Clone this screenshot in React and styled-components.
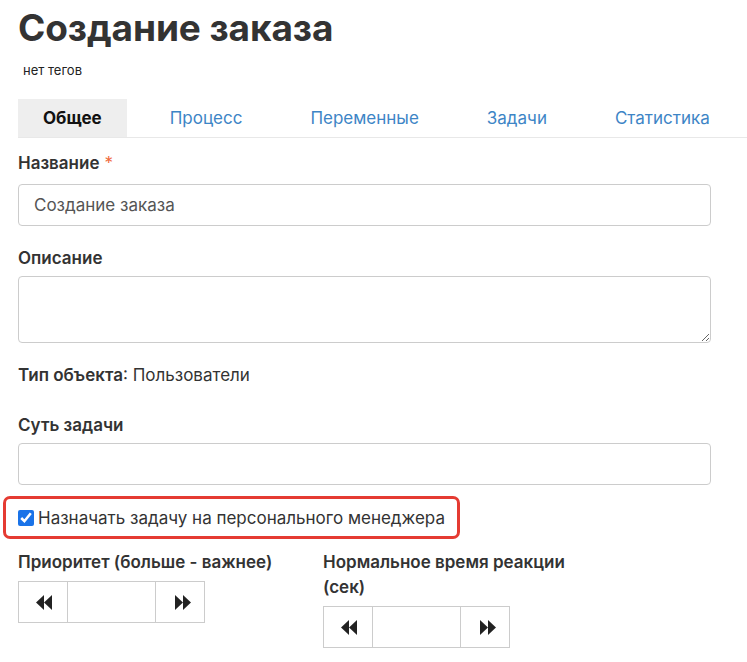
import React, { useState } from 'react';
import styled, { createGlobalStyle } from 'styled-components';

const GlobalStyle = createGlobalStyle`
  body {
    margin: 0;
    background: #fff;
    font-family: Inter, 'Noto Sans', sans-serif;
    color: #333;
  }
`;

const Page = styled.div`
  padding: 6px 0 0 18px;
`;

const Title = styled.h1`
  font-size: 37px;
  font-weight: 700;
  line-height: 44px;
  margin: 0;
  color: #333;
  letter-spacing: -0.1px;
`;

const Tags = styled.div`
  font-size: 13px;
  color: #222;
  margin: 12px 0 0 5px;
  line-height: 16px;
`;

const TabBar = styled.ul`
  display: flex;
  list-style: none;
  margin: 21px 0 0 0;
  padding: 0;
  border-bottom: 1px solid #e8e8e8;
  gap: 18px;
`;

const Tab = styled.li`
  padding: 0 25px;
  height: 38px;
  display: flex;
  align-items: center;
  font-size: 17px;
  font-weight: ${props => (props.active ? 700 : 400)};
  color: ${props => (props.active ? '#111' : '#3d85c6')};
  background: ${props => (props.active ? '#eee' : 'transparent')};
  cursor: pointer;
`;

const Form = styled.form`
  width: 693px;
  padding-top: 14px;
`;

const Field = styled.div`
  margin-bottom: ${props => props.gap ?? 21}px;
`;

const Label = styled.label`
  display: block;
  font-size: 17px;
  font-weight: 600;
  line-height: 22px;
  margin-bottom: ${props => props.gap ?? 7}px;
  color: #333;
`;

const Required = styled.span`
  color: #f06a3c;
  font-weight: 400;
  margin-left: 5px;
`;

const TextInput = styled.input`
  display: block;
  box-sizing: border-box;
  width: 100%;
  height: 42px;
  border: 1px solid #ccc;
  border-radius: 4px;
  padding: 0 15px;
  font-family: Inter, 'Noto Sans', sans-serif;
  font-size: 17px;
  color: #555;
  outline: none;
`;

const TextArea = styled.textarea`
  display: block;
  box-sizing: border-box;
  width: 100%;
  height: 67px;
  border: 1px solid #ccc;
  border-radius: 4px;
  padding: 8px 15px;
  font-family: Inter, 'Noto Sans', sans-serif;
  font-size: 17px;
  outline: none;
`;

const InfoLine = styled.div`
  font-size: 17px;
  line-height: 22px;
  color: #333;
  margin-bottom: 28px;

  b {
    font-weight: 600;
  }
`;

const Highlight = styled.div`
  display: inline-flex;
  align-items: center;
  margin: 11px 0 0 -15px;
  padding: 0 12px 0 12px;
  height: 37px;
  border: 3px solid #e53b32;
  border-radius: 7px;
`;

const CheckLabel = styled.label`
  display: flex;
  align-items: center;
  font-size: 17px;
  color: #333;
  cursor: pointer;

  input {
    width: 16px;
    height: 16px;
    margin: 0 4px 0 0;
    accent-color: #1a73e8;
  }
`;

const Columns = styled.div`
  display: grid;
  grid-template-columns: 305px 260px;
  margin-top: 11px;
`;

const SpinLabel = styled(Label)`
  line-height: 25px;
  margin-bottom: 6px;
`;

const Spinner = styled.div`
  display: flex;
  width: 187px;
  height: 42px;
  border: 1px solid #ccc;
  box-sizing: border-box;
`;

const SpinButton = styled.button`
  width: 49px;
  border: none;
  background: #fff;
  display: flex;
  align-items: center;
  justify-content: center;
  padding: 0 0 0 4px;
  cursor: pointer;
  border-${props => (props.side === 'left' ? 'right' : 'left')}: 1px solid #ccc;
`;

const SpinValue = styled.input`
  flex: 1;
  min-width: 0;
  border: none;
  outline: none;
  font-size: 17px;
  text-align: center;
`;

const Arrows = ({ dir }) => (
  <svg width="18" height="15" viewBox="0 0 18 15">
    {dir === 'left' ? (
      <g fill="#222">
        <polygon points="0,7.5 8,0 8,15" />
        <polygon points="8,7.5 16,0 16,15" />
      </g>
    ) : (
      <g fill="#222">
        <polygon points="2,0 10,7.5 2,15" />
        <polygon points="10,0 18,7.5 10,15" />
      </g>
    )}
  </svg>
);

const NumberSpinner = ({ value, onChange }) => (
  <Spinner>
    <SpinButton type="button" side="left" onClick={() => onChange(Number(value) - 1)}>
      <Arrows dir="left" />
    </SpinButton>
    <SpinValue value={value === null ? '' : value} onChange={e => onChange(e.target.value)} />
    <SpinButton type="button" side="right" onClick={() => onChange(Number(value) + 1)}>
      <Arrows dir="right" />
    </SpinButton>
  </Spinner>
);

const tabs = ['Общее', 'Процесс', 'Переменные', 'Задачи', 'Статистика'];

const App = () => {
  const [activeTab, setActiveTab] = useState('Общее');
  const [name, setName] = useState('Создание заказа');
  const [assign, setAssign] = useState(true);
  const [priority, setPriority] = useState(null);
  const [reaction, setReaction] = useState(null);

  return (
    <Page>
      <GlobalStyle />
      <Title>Создание заказа</Title>
      <Tags>нет тегов</Tags>
      <TabBar>
        {tabs.map(tab => (
          <Tab key={tab} active={tab === activeTab} onClick={() => setActiveTab(tab)}>
            {tab}
          </Tab>
        ))}
      </TabBar>
      <Form onSubmit={e => e.preventDefault()}>
        <Field>
          <Label htmlFor="task-name" gap={10}>
            Название<Required>*</Required>
          </Label>
          <TextInput id="task-name" value={name} onChange={e => setName(e.target.value)} />
        </Field>
        <Field>
          <Label htmlFor="task-desc">Описание</Label>
          <TextArea id="task-desc" />
        </Field>
        <InfoLine>
          <b>Тип объекта</b>: Пользователи
        </InfoLine>
        <Field gap={0}>
          <Label htmlFor="task-essence">Суть задачи</Label>
          <TextInput id="task-essence" />
        </Field>
        <Highlight>
          <CheckLabel>
            <input type="checkbox" checked={assign} onChange={e => setAssign(e.target.checked)} />
            Назначать задачу на персонального менеджера
          </CheckLabel>
        </Highlight>
        <Columns>
          <div>
            <SpinLabel>Приоритет (больше - важнее)</SpinLabel>
            <NumberSpinner value={priority} onChange={setPriority} />
          </div>
          <div>
            <SpinLabel>Нормальное время реакции (сек)</SpinLabel>
            <NumberSpinner value={reaction} onChange={setReaction} />
          </div>
        </Columns>
      </Form>
    </Page>
  );
};

export default App;
